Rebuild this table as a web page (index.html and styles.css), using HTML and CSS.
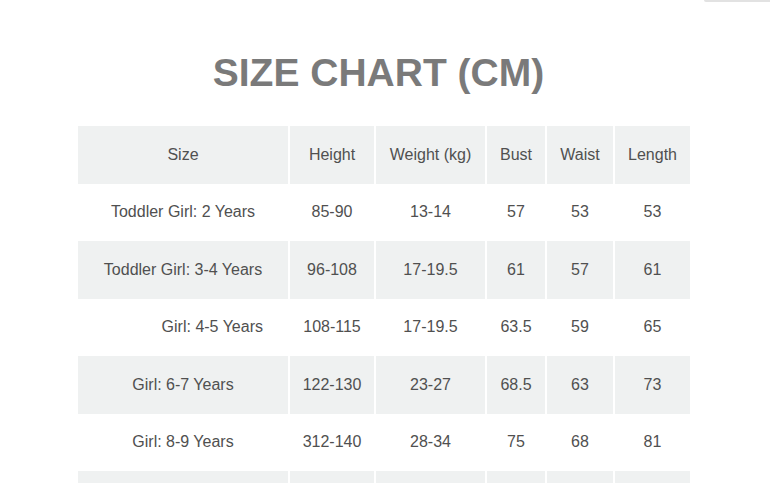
FILE: index.html
```html
<!DOCTYPE html>
<html>
<head>
<meta charset="utf-8">
<link rel="stylesheet" href="styles.css">
</head>
<body>
<div class="corner"></div>
<main class="page">
  <h1 class="title">SIZE CHART (CM)</h1>
  <table class="chart">
    <colgroup>
      <col class="c-size"><col class="c-height"><col class="c-weight"><col class="c-bust"><col class="c-waist"><col class="c-length">
    </colgroup>
    <tr class="shade">
      <td>Size</td><td>Height</td><td>Weight (kg)</td><td>Bust</td><td>Waist</td><td>Length</td>
    </tr>
    <tr>
      <td>Toddler Girl: 2 Years</td><td>85-90</td><td>13-14</td><td>57</td><td>53</td><td>53</td>
    </tr>
    <tr class="shade">
      <td>Toddler Girl: 3-4 Years</td><td>96-108</td><td>17-19.5</td><td>61</td><td>57</td><td>61</td>
    </tr>
    <tr>
      <td class="right">Girl: 4-5 Years</td><td>108-115</td><td>17-19.5</td><td>63.5</td><td>59</td><td>65</td>
    </tr>
    <tr class="shade">
      <td>Girl: 6-7 Years</td><td>122-130</td><td>23-27</td><td>68.5</td><td>63</td><td>73</td>
    </tr>
    <tr>
      <td>Girl: 8-9 Years</td><td>312-140</td><td>28-34</td><td>75</td><td>68</td><td>81</td>
    </tr>
    <tr class="shade">
      <td>&nbsp;</td><td>&nbsp;</td><td>&nbsp;</td><td>&nbsp;</td><td>&nbsp;</td><td>&nbsp;</td>
    </tr>
  </table>
</main>
</body>
</html>
```

FILE: styles.css
```css
html, body {
  margin: 0;
  padding: 0;
  background: #ffffff;
  overflow: hidden;
}

body {
  font-family: "Liberation Sans", Arial, sans-serif;
  color: #505050;
}

.corner {
  position: absolute;
  top: 0;
  right: 0;
  width: 66px;
  height: 2px;
  background: #e2e2e2;
  border-bottom-left-radius: 2px;
}

.page {
  padding-top: 53px;
}

.title {
  margin: 0 0 33px 0;
  padding-right: 13px;
  font-size: 39px;
  line-height: 40px;
  font-weight: bold;
  text-align: center;
  color: #7a7a7a;
}

.chart {
  margin-left: 76px;
  border-collapse: separate;
  border-spacing: 2px 0;
  table-layout: fixed;
  width: 616px;
  font-size: 16px;
}

.c-size { width: 210px; }
.c-height { width: 84px; }
.c-weight { width: 109px; }
.c-bust { width: 58px; }
.c-waist { width: 66px; }
.c-length { width: 75px; }

.chart tr {
  height: 57.5px;
}

.chart td {
  padding: 0;
  text-align: center;
  vertical-align: middle;
  white-space: nowrap;
}

.chart .shade td {
  background: #eff1f1;
}

.chart td.right {
  text-align: right;
  padding-right: 25px;
}
```
